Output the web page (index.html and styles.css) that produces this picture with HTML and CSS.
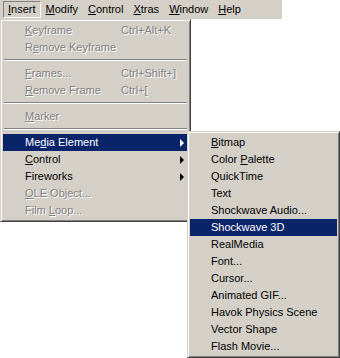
FILE: index.html
```html
<!DOCTYPE html>
<html lang="en">
<head>
    <meta charset="UTF-8">
    <title>Insert menu</title>
    <link rel="stylesheet" href="styles.css">
</head>
<body>
    <div class="menubar">
        <span class="top-item pressed"><u>I</u>nsert</span>
        <span class="top-item"><u>M</u>odify</span>
        <span class="top-item"><u>C</u>ontrol</span>
        <span class="top-item"><u>X</u>tras</span>
        <span class="top-item"><u>W</u>indow</span>
        <span class="top-item"><u>H</u>elp</span>
    </div>

    <!-- Insert dropdown -->
    <div class="menu insert-menu">
        <div class="item disabled"><span class="label"><u>K</u>eyframe</span><span class="key">Ctrl+Alt+K</span></div>
        <div class="item disabled"><span class="label">R<u>e</u>move Keyframe</span></div>
        <div class="sep"></div>
        <div class="item disabled"><span class="label"><u>F</u>rames...</span><span class="key">Ctrl+Shift+]</span></div>
        <div class="item disabled"><span class="label"><u>R</u>emove Frame</span><span class="key">Ctrl+[</span></div>
        <div class="sep"></div>
        <div class="item disabled"><span class="label"><u>M</u>arker</span></div>
        <div class="sep"></div>
        <div class="item active"><span class="label">Me<u>d</u>ia Element</span><span class="arrow"></span></div>
        <div class="item"><span class="label"><u>C</u>ontrol</span><span class="arrow"></span></div>
        <div class="item"><span class="label">Fireworks</span><span class="arrow"></span></div>
        <div class="item disabled"><span class="label"><u>O</u>LE Object...</span></div>
        <div class="item disabled"><span class="label">Film <u>L</u>oop...</span></div>
    </div>

    <!-- Media Element submenu -->
    <div class="menu sub-menu">
        <div class="item"><span class="label"><u>B</u>itmap</span></div>
        <div class="item"><span class="label">Color <u>P</u>alette</span></div>
        <div class="item"><span class="label">QuickTime</span></div>
        <div class="item"><span class="label">Text</span></div>
        <div class="item"><span class="label">Shockwave Audio...</span></div>
        <div class="item active"><span class="label">Shockwave 3D</span></div>
        <div class="item"><span class="label">RealMedia</span></div>
        <div class="item"><span class="label">Font...</span></div>
        <div class="item"><span class="label">Cursor...</span></div>
        <div class="item"><span class="label">Animated GIF...</span></div>
        <div class="item"><span class="label">Havok Physics Scene</span></div>
        <div class="item"><span class="label">Vector Shape</span></div>
        <div class="item"><span class="label">Flash Movie...</span></div>
    </div>
</body>
</html>
```

FILE: styles.css
```css
body {
    margin: 0;
    background: #fff;
    font-family: "Liberation Sans", Arial, sans-serif;
    font-size: 11px;
    color: #000;
    position: relative;
    height: 358px;
    overflow: hidden;
}

u {
    text-decoration: underline;
    text-underline-offset: 1px;
}

.menubar {
    width: 282px;
    height: 19px;
    background: #d4d0c8;
    display: flex;
    align-items: center;
    padding-left: 3px;
    box-sizing: border-box;
}

.top-item {
    height: 17px;
    line-height: 15px;
    padding: 0 4px;
    box-sizing: border-box;
    border: 1px solid transparent;
}

.top-item.pressed {
    border-color: #808080 #fff #fff #808080;
}

.menu {
    position: absolute;
    background: #d4d0c8;
    border: 1px solid;
    border-color: #d4d0c8 #404040 #404040 #d4d0c8;
    box-shadow: inset 1px 1px #fff, inset -1px -1px #808080;
    padding: 2px;
    box-sizing: border-box;
}

.insert-menu {
    left: 0;
    top: 19px;
    width: 191px;
}

.sub-menu {
    left: 187px;
    top: 131px;
    width: 153px;
}

.item {
    height: 17px;
    line-height: 17px;
    display: flex;
    align-items: center;
    white-space: nowrap;
}

.insert-menu .label {
    padding-left: 22px;
    width: 96px;
}

.sub-menu .label {
    padding-left: 21px;
}

.item.active {
    background: #0a246a;
    color: #fff;
}

.item.disabled {
    color: #808080;
    text-shadow: 1px 1px 0 #fff;
}

.arrow {
    margin-left: auto;
    margin-right: 4px;
    width: 0;
    height: 0;
    border-left: 4px solid #000;
    border-top: 4px solid transparent;
    border-bottom: 4px solid transparent;
}

.item.active .arrow {
    border-left-color: #fff;
}

.sep {
    height: 9px;
    margin: 0 1px;
    position: relative;
}

.sep::after {
    content: "";
    position: absolute;
    left: 0;
    right: 0;
    top: 3px;
    border-top: 1px solid #808080;
    border-bottom: 1px solid #fff;
}
```
